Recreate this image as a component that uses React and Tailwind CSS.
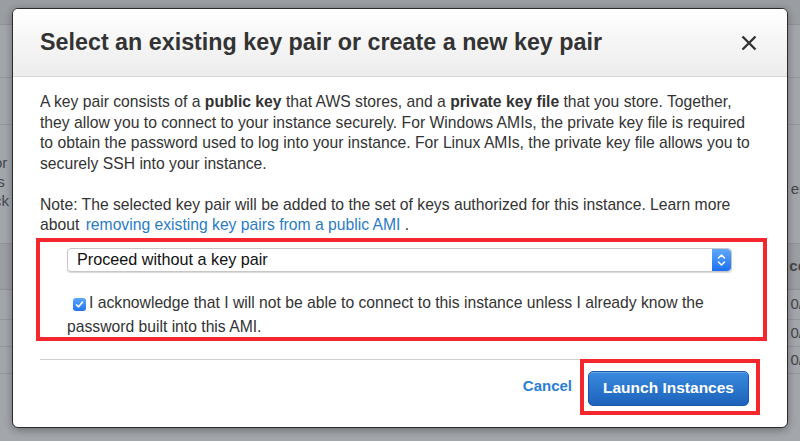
import React from "react";

const BgRows = () => {
  return (
    <div className="flex flex-col w-full h-full">
      <div className="h-[25px] bg-[#9a9da2] border-b border-[#8f9297]"></div>
      <div className="h-[53px] bg-[#a3a6ab] border-b border-[#94979c]"></div>
      <div className="h-[47px] bg-[#a3a6ab] border-b border-[#94979c]"></div>
      <div className="h-[118px] bg-[#a3a6ab] flex justify-between items-start text-[15px] text-[#45474b] leading-[19px] pt-[28px]">
        <div className="-ml-[6px]">
          <div>or</div>
          <div>is</div>
          <div>ck</div>
        </div>
        <div className="mt-[26px] mr-[-4px]">er</div>
      </div>
      <div className="h-[47px] bg-[#9b9ea3] border-y border-[#8f9297] flex justify-end items-center text-[15px] font-bold text-[#45474b]">
        <span className="mr-[-6px]">ce</span>
      </div>
      <div className="h-[30px] bg-[#a3a6ab] border-b border-[#94979c] flex justify-end items-center text-[15px] text-[#45474b]">
        <span className="mr-[-3px]">0/</span>
      </div>
      <div className="h-[27px] bg-[#a3a6ab] border-b border-[#94979c] flex justify-end items-center text-[15px] text-[#45474b]">
        <span className="mr-[-3px]">0/</span>
      </div>
      <div className="h-[27px] bg-[#a3a6ab] border-b border-[#94979c] flex justify-end items-center text-[15px] text-[#45474b]">
        <span className="mr-[-3px]">0/</span>
      </div>
      <div className="flex-1 bg-[#a3a6ab]"></div>
    </div>
  );
};

const App = () => {
  return (
    <div
      className="relative w-[800px] h-[441px] overflow-hidden bg-[#a3a6ab]"
      style={{ fontFamily: '"Liberation Sans", Arial, sans-serif' }}
    >
      <BgRows />
      <div className="absolute left-[12px] top-[8px] w-[776px] h-[420px] bg-white border border-[#2b2b2b] rounded-[6px] shadow-[0_2px_8px_rgba(0,0,0,0.35)] flex flex-col overflow-hidden">
        <div className="h-[68px] shrink-0 bg-gradient-to-b from-white to-[#ececec] border-b border-[#d6d6d6] flex items-center justify-between pl-[27px] pr-[30px]">
          <h1 className="text-[23.3px] font-bold text-[#333] whitespace-nowrap">
            Select an existing key pair or create a new key pair
          </h1>
          <svg width="16" height="16" viewBox="0 0 16 16" className="mt-[1px]">
            <path d="M1.5 1.5 L14.5 14.5 M14.5 1.5 L1.5 14.5" stroke="#333" strokeWidth="2.4" />
          </svg>
        </div>

        <div className="px-[27px] pt-[15px] text-[15.7px] leading-[20.5px] text-[#333] whitespace-nowrap">
          <p>
            A key pair consists of a <b>public key</b> that AWS stores, and a <b>private key file</b> that you store. Together,
            <br />
            they allow you to connect to your instance securely. For Windows AMIs, the private key file is required
            <br />
            to obtain the password used to log into your instance. For Linux AMIs, the private key file allows you to
            <br />
            securely SSH into your instance.
          </p>
          <p className="mt-[20.5px]">
            Note: The selected key pair will be added to the set of keys authorized for this instance. Learn more
            <br />
            about <span className="text-[#2a7bc6] ml-[2px]">removing existing key pairs from a public AMI</span> .
          </p>
        </div>

        <div className="ml-[23px] mr-[20px] mt-[2px] h-[103px] shrink-0 border-[4px] border-[#f4272f] pl-[27px] pr-[31px] pt-[6px] text-[#333]">
          <div className="h-[24px] flex items-center justify-between rounded-[4px] border border-[#c7c7c7] shadow-[0_1px_1px_rgba(0,0,0,0.15)] bg-white pl-[9px] overflow-hidden">
            <span className="text-[16.2px] text-[#111]">Proceed without a key pair</span>
            <div className="w-[19px] h-full bg-gradient-to-b from-[#5fa8ff] to-[#1a70f0] rounded-r-[4px] flex items-center justify-center">
              <svg width="9" height="14" viewBox="0 0 9 14">
                <path d="M1.5 5 L4.5 2 L7.5 5 M1.5 9 L4.5 12 L7.5 9" fill="none" stroke="white" strokeWidth="1.5" strokeLinecap="round" strokeLinejoin="round" />
              </svg>
            </div>
          </div>
          <div className="mt-[19px] leading-[24px] text-[15.7px] whitespace-nowrap">
            <span className="inline-flex align-[-1px] w-[13px] h-[13px] rounded-[3px] bg-gradient-to-b from-[#5aa6ff] to-[#1f74ee] items-center justify-center ml-[6px] mr-[3px]">
              <svg width="9" height="9" viewBox="0 0 9 9">
                <path d="M1.5 4.8 L3.6 6.8 L7.6 2" fill="none" stroke="white" strokeWidth="1.6" strokeLinecap="round" strokeLinejoin="round" />
              </svg>
            </span>
            I acknowledge that I will not be able to connect to this instance unless I already know the
            <br />
            password built into this AMI.
          </div>
        </div>

        <div className="flex items-start mt-[18px] pl-[27px] pr-[27px]">
          <div className="flex-1 border-t border-[#cfcfcf]"></div>
        </div>

        <div className="flex justify-end items-center pr-[27px] -mt-[1px]">
          <span className="text-[15px] font-bold text-[#2a7fd6] mr-[8px]">Cancel</span>
          <div className="border-[4px] border-[#f4272f] pl-[4px] pr-[7px] pt-[8px] pb-[5px] bg-white">
            <button className="w-[161px] h-[35px] rounded-[5px] border border-[#1a5aa8] bg-gradient-to-b from-[#3a8ae0] to-[#1c62bb] text-white font-bold text-[15.5px] shadow-[inset_0_1px_0_rgba(255,255,255,0.25)]">
              Launch Instances
            </button>
          </div>
        </div>
      </div>
    </div>
  );
};

export default App;
